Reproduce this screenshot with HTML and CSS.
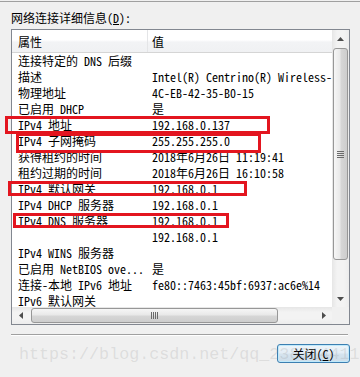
FILE: index.html
```
<!DOCTYPE html>
<html lang="zh-CN">
<head>
    <meta charset="UTF-8">
    <title>网络连接详细信息</title>
    <link rel="stylesheet" href="styles.css">
</head>
<body>

<div class="dialog">
    <div class="caption">网络连接详细信息(<u>D</u>):</div>

    <div class="listbox">
        <div class="view">
            <div class="head">
                <div class="hcell hprop">属性</div>
                <div class="hcell">值</div>
            </div>
            <div class="row"><span class="prop">连接特定的 DNS 后缀</span><span class="val"></span></div>
            <div class="row"><span class="prop">描述</span><span class="val">Intel(R) Centrino(R) Wireless-N 2230</span></div>
            <div class="row"><span class="prop">物理地址</span><span class="val">4C-EB-42-35-B0-15</span></div>
            <div class="row"><span class="prop">已启用 DHCP</span><span class="val">是</span></div>
            <div class="row"><span class="prop">IPv4 地址</span><span class="val">192.168.0.137</span></div>
            <div class="row"><span class="prop">IPv4 子网掩码</span><span class="val">255.255.255.0</span></div>
            <div class="row"><span class="prop">获得租约的时间</span><span class="val">2018年6月26日 11:19:41</span></div>
            <div class="row"><span class="prop">租约过期的时间</span><span class="val">2018年6月26日 16:10:58</span></div>
            <div class="row"><span class="prop">IPv4 默认网关</span><span class="val">192.168.0.1</span></div>
            <div class="row"><span class="prop">IPv4 DHCP 服务器</span><span class="val">192.168.0.1</span></div>
            <div class="row"><span class="prop">IPv4 DNS 服务器</span><span class="val">192.168.0.1</span></div>
            <div class="row"><span class="prop"></span><span class="val">192.168.0.1</span></div>
            <div class="row"><span class="prop">IPv4 WINS 服务器</span><span class="val"></span></div>
            <div class="row"><span class="prop">已启用 NetBIOS ove...</span><span class="val">是</span></div>
            <div class="row"><span class="prop">连接-本地 IPv6 地址</span><span class="val">fe80::7463:45bf:6937:ac6e%14</span></div>
            <div class="row"><span class="prop">IPv6 默认网关</span><span class="val"></span></div>
        </div>

        <div class="vscroll">
            <div class="sbtn">
                <svg width="7" height="4" viewBox="0 0 7 4"><path d="M3.5 0L7 4H0z" fill="#4d4d4d"/></svg>
            </div>
            <div class="vthumb">
                <svg width="7" height="7" viewBox="0 0 7 7"><path d="M0 0.5h7M0 2.5h7M0 4.5h7M0 6.5h7" stroke="#6b6b6b"/></svg>
            </div>
            <div class="track"></div>
            <div class="sbtn">
                <svg width="7" height="4" viewBox="0 0 7 4"><path d="M0 0H7L3.5 4z" fill="#4d4d4d"/></svg>
            </div>
        </div>

        <div class="hscroll">
            <div class="sbtn">
                <svg width="4" height="7" viewBox="0 0 4 7"><path d="M0 3.5L4 0V7z" fill="#4d4d4d"/></svg>
            </div>
            <div class="hthumb">
                <svg width="7" height="7" viewBox="0 0 7 7"><path d="M0.5 0v7M2.5 0v7M4.5 0v7M6.5 0v7" stroke="#6b6b6b"/></svg>
            </div>
            <div class="track"></div>
            <div class="sbtn">
                <svg width="4" height="7" viewBox="0 0 4 7"><path d="M0 0L4 3.5L0 7z" fill="#4d4d4d"/></svg>
            </div>
        </div>

        <div class="corner"></div>
    </div>

    <div class="sep"></div>

    <div class="actions">
        <button class="btn">关闭(<u>C</u>)</button>
    </div>

    <!-- red annotation boxes drawn over the screenshot -->
    <div class="mark mark-ip"></div>
    <div class="mark mark-mask"></div>
    <div class="mark mark-gw"></div>
    <div class="mark mark-dns"></div>

    <div class="watermark">https://blog.csdn.net/qq_238314411</div>
</div>

</body>
</html>
```

FILE: styles.css
```
body {
    margin: 0;
    background: #f0f0f0;
    font-family: "Noto Sans Mono CJK SC", "Noto Sans CJK SC", monospace;
    font-size: 12px;
    color: #000;
}

.dialog {
    position: relative;
    height: 376px;
    box-sizing: border-box;
    margin-top: 1px;
    border-top: 1px solid #a0a0a0;
    padding: 8px 10px 0 11px;
    overflow: hidden;
}

.caption {
    height: 16px;
    line-height: 16px;
    margin-bottom: 3px;
    white-space: nowrap;
}

.listbox {
    width: 339px;
    height: 296px;
    box-sizing: border-box;
    border: 1px solid #828790;
    background: #fff;
    display: grid;
    grid-template-columns: 320px 17px;
    grid-template-rows: 277px 17px;
}

.view {
    overflow: hidden;
}

.head {
    display: flex;
    height: 22px;
    line-height: 23px;
    border-bottom: 1px solid #d5d5d5;
    background: linear-gradient(#ffffff 0%, #ffffff 45%, #f2f3f5 55%, #f0f1f3 100%);
}

.hcell {
    padding-left: 4px;
}

.hprop {
    width: 136px;
    box-sizing: border-box;
    padding-left: 6px;
    border-right: 1px solid #e4e5e7;
}

.row {
    display: flex;
    height: 16px;
    line-height: 16px;
    white-space: nowrap;
}

.row .prop {
    width: 140px;
    flex: none;
    box-sizing: border-box;
    padding-left: 6px;
    overflow: hidden;
}

.row .val {
    flex: none;
}

.vscroll {
    display: flex;
    flex-direction: column;
    background: linear-gradient(to right, #e6e6e6, #f3f3f3 30%, #f3f3f3 70%, #ececec);
}

.hscroll {
    display: flex;
    background: linear-gradient(#e6e6e6, #f3f3f3 30%, #f3f3f3 70%, #ececec);
}

.sbtn {
    width: 17px;
    height: 17px;
    flex: none;
    display: flex;
    align-items: center;
    justify-content: center;
}

.track {
    flex: 1;
}

.vthumb {
    height: 210px;
    margin: 1px 1px 0 1px;
    border: 1px solid #979797;
    border-radius: 3px;
    background: linear-gradient(to right, #f6f6f6, #e9e9e9 45%, #d6d6d6 55%, #cdcdcd);
    display: flex;
    align-items: center;
    justify-content: center;
}

.hthumb {
    width: 245px;
    margin: 1px 0 1px 2px;
    border: 1px solid #979797;
    border-radius: 3px;
    background: linear-gradient(#f6f6f6, #e9e9e9 45%, #d6d6d6 55%, #cdcdcd);
    display: flex;
    align-items: center;
    justify-content: center;
}

.corner {
    background: #f0f0f0;
}

.sep {
    width: 337px;
    height: 1px;
    margin-top: 9px;
    background: #a0a0a0;
    border-bottom: 1px solid #ffffff;
}

.actions {
    display: flex;
    justify-content: flex-end;
    margin-top: 8px;
}

.btn {
    width: 73px;
    height: 19px;
    padding: 0;
    font: inherit;
    line-height: 17px;
    color: #000;
    border: 1px solid #3c7fb1;
    border-radius: 3px;
    background: linear-gradient(#eef5fa, #e3edf5 45%, #d5e3ee 55%, #cddde9);
    box-shadow: inset 0 0 0 1px #bfe9fb;
}

.mark {
    position: absolute;
    box-sizing: border-box;
    border: 3px solid #e3151f;
}

.mark-ip {
    left: 5px;
    top: 114px;
    width: 265px;
    height: 18px;
}

.mark-mask {
    left: 16px;
    top: 131px;
    width: 245px;
    height: 20px;
}

.mark-gw {
    left: 8px;
    top: 179px;
    width: 239px;
    height: 15px;
}

.mark-dns {
    left: 13px;
    top: 211px;
    width: 216px;
    height: 15px;
}

.watermark {
    position: absolute;
    left: 19px;
    top: 343px;
    font-family: "Liberation Mono", monospace;
    font-size: 16.7px;
    line-height: 20px;
    white-space: nowrap;
    color: rgba(140, 140, 140, 0.2);
    pointer-events: none;
}
```
